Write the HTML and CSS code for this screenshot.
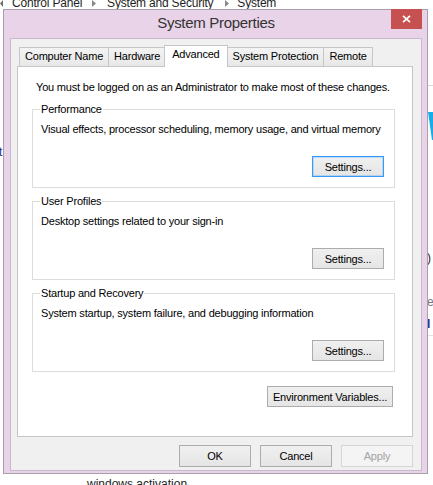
FILE: index.html
```html
<!DOCTYPE html>
<html>
<head>
<meta charset="utf-8">
<link rel="stylesheet" href="styles.css">
</head>
<body>
<div class="desktop">
  <div class="bg">
    <div class="crumbs">
      <svg class="crumb-back" width="3" height="7" viewBox="0 0 3 7"><path d="M0 3.5 L3 0 L3 7 Z" fill="#6d6d6d"/></svg>
      <span class="crumb">Control Panel</span>
      <svg class="sep" width="4" height="7" viewBox="0 0 4 7"><path d="M0 0 L4 3.5 L0 7 Z" fill="#8a8a8a"/></svg>
      <span class="crumb">System and Security</span>
      <svg class="sep sep2" width="4" height="7" viewBox="0 0 4 7"><path d="M0 0 L4 3.5 L0 7 Z" fill="#8a8a8a"/></svg>
      <span class="crumb">System</span>
    </div>
    <div class="bg-middle">
      <div class="edge-left"><span class="edge-t">t</span></div>
      <div class="edge-right">
        <div class="edge-rule rule1"></div>
        <div class="edge-blue"></div>
        <div class="edge-char paren">)</div>
        <div class="edge-char grey">e</div>
        <div class="edge-char link">l</div>
        <div class="edge-rule rule2"></div>
      </div>
    </div>
    <div class="bg-bottom">windows activation</div>
  </div>

  <div class="window">
    <div class="titlebar">System Properties</div>
    <button class="close" aria-label="Close">
      <svg width="9" height="8" viewBox="0 0 9 8"><path d="M1 0.8 L8 7.2 M8 0.8 L1 7.2" stroke="#fff" stroke-width="1.7" fill="none"/></svg>
    </button>
    <div class="client">
      <div class="tabs">
        <div class="tab">Computer Name</div>
        <div class="tab">Hardware</div>
        <div class="tab active">Advanced</div>
        <div class="tab">System Protection</div>
        <div class="tab">Remote</div>
      </div>
      <div class="panel">
        <p class="intro">You must be logged on as an Administrator to make most of these changes.</p>
        <fieldset class="group">
          <legend>Performance</legend>
          <p class="desc">Visual effects, processor scheduling, memory usage, and virtual memory</p>
          <div class="group-actions"><button class="btn settings focused">Settings...</button></div>
        </fieldset>
        <fieldset class="group">
          <legend>User Profiles</legend>
          <p class="desc">Desktop settings related to your sign-in</p>
          <div class="group-actions"><button class="btn settings">Settings...</button></div>
        </fieldset>
        <fieldset class="group">
          <legend>Startup and Recovery</legend>
          <p class="desc">System startup, system failure, and debugging information</p>
          <div class="group-actions"><button class="btn settings">Settings...</button></div>
        </fieldset>
        <div class="env-row"><button class="btn env">Environment Variables...</button></div>
      </div>
      <div class="actions">
        <button class="btn dlg">OK</button>
        <button class="btn dlg">Cancel</button>
        <button class="btn dlg" disabled>Apply</button>
      </div>
    </div>
  </div>
</div>
</body>
</html>
```

FILE: styles.css
```css
html, body {
  margin: 0;
  padding: 0;
}

body {
  font-family: "Liberation Sans", Arial, sans-serif;
  color: #000;
}

.desktop {
  position: relative;
  width: 433px;
  height: 485px;
  overflow: hidden;
  background: #fff;
}

/* ---------- background page ---------- */
.bg {
  display: flex;
  flex-direction: column;
  height: 100%;
}

.crumbs {
  display: flex;
  align-items: center;
  height: 14px;
  margin-top: -4px;
  font-size: 12px;
  line-height: 14px;
  letter-spacing: -0.2px;
  color: #1e1e1e;
  white-space: nowrap;
  flex: none;
}

.crumb-back {
  margin-right: 9px;
  flex: none;
}

.sep {
  flex: none;
  margin: 0 11px 0 10px;
}

.sep2 {
  margin: 0 8px 0 12px;
}

.bg-middle {
  flex: 1;
  display: flex;
  justify-content: space-between;
}

.edge-left {
  width: 3px;
  overflow: hidden;
  padding-top: 135px;
}

.edge-t {
  display: block;
  margin-left: -1px;
  font-size: 12px;
  line-height: 14px;
  color: #1d2f86;
}

.edge-right {
  width: 5px;
  overflow: hidden;
  display: flex;
  flex-direction: column;
}

.edge-rule {
  height: 1px;
  background: #dadada;
  flex: none;
}

.rule1 {
  margin-top: 75px;
}

.rule2 {
  margin-top: 4px;
  background: #e3e3e3;
}

.edge-blue {
  margin-top: 26px;
  height: 28px;
  flex: none;
  background: #16aeea;
  clip-path: polygon(0 0, 100% 0, 100% 100%, 80% 100%);
}

.edge-char {
  font-size: 12px;
  line-height: 14px;
  height: 14px;
  flex: none;
  margin-left: -1px;
}

.paren {
  margin-top: 111px;
  color: #222;
}

.grey {
  margin-top: 30px;
  color: #777;
}

.link {
  margin-top: 8px;
  color: #1d2f86;
  font-weight: bold;
}

.bg-bottom {
  height: 8px;
  flex: none;
  padding-left: 87px;
  font-size: 12px;
  line-height: 14px;
  color: #222;
  white-space: nowrap;
}

/* ---------- window ---------- */
.window {
  position: absolute;
  left: 3px;
  top: 9px;
  width: 425px;
  height: 465px;
  box-sizing: border-box;
  border: 1px solid #ab9eab;
  background: #e9d3e8;
  padding: 0 5px 2px 6px;
  display: flex;
  flex-direction: column;
}

.titlebar {
  height: 28px;
  box-sizing: border-box;
  padding-top: 4px;
  text-align: center;
  font-size: 15px;
  line-height: 17px;
  letter-spacing: -0.3px;
  color: #333;
  flex: none;
}

.close {
  position: absolute;
  top: -1px;
  right: 5px;
  width: 31px;
  height: 20px;
  border: 0;
  padding: 0;
  background: #c75050;
  display: flex;
  align-items: center;
  justify-content: center;
}

.client {
  flex: 1;
  border: 1px solid #c9b8c9;
  background: #f0f0f0;
  padding: 6px 8px 0 6px;
  display: flex;
  flex-direction: column;
  font-size: 11px;
  letter-spacing: -0.2px;
}

/* tabs */
.tabs {
  display: flex;
  align-items: flex-end;
  padding-left: 2px;
  flex: none;
}

.tab {
  box-sizing: border-box;
  height: 19px;
  padding: 0 5px;
  border: 1px solid #c6c6c6;
  border-bottom: 0;
  margin-right: -1px;
  background: linear-gradient(#f3f3f3, #e8e8e8);
  line-height: 17px;
  white-space: nowrap;
}

.tab.active {
  height: 22px;
  margin: 0 -1px -1px -1px;
  padding: 0 7px;
  background: #fff;
  position: relative;
  z-index: 1;
}

/* panel */
.panel {
  flex: none;
  height: 371px;
  box-sizing: border-box;
  border: 1px solid #c6c6c6;
  background: #fff;
  padding: 13px 17px 0 14px;
}

.intro {
  margin: 0;
  padding-left: 4px;
  line-height: 14px;
  white-space: nowrap;
}

.group {
  margin: 6px 0 0;
  padding: 0 10px 10px 8px;
  border: 1px solid #dcdcdc;
  min-width: 0;
}

.group:first-of-type {
  margin-top: 8px;
}

.group legend {
  padding: 0 1px;
  margin-left: -1px;
  line-height: 14px;
}

.desc {
  margin: 6px 0 0;
  line-height: 14px;
  white-space: nowrap;
}

.group-actions {
  display: flex;
  justify-content: flex-end;
  margin-top: 20px;
}

.btn {
  box-sizing: border-box;
  height: 21px;
  padding: 0;
  border: 1px solid #acacac;
  background: linear-gradient(#f0f0f0, #e5e5e5);
  font-family: "Liberation Sans", Arial, sans-serif;
  font-size: 11px;
  letter-spacing: -0.2px;
  color: #000;
  border-radius: 0;
}

.settings {
  width: 72px;
}

.focused {
  border-color: #3399ff;
  box-shadow: inset 0 0 0 1px rgba(51, 153, 255, 0.25);
}

.env-row {
  display: flex;
  justify-content: flex-end;
  margin-top: 14px;
  padding-right: 2px;
}

.env {
  width: 126px;
}

.actions {
  display: flex;
  justify-content: flex-end;
  gap: 9px;
  margin-top: 8px;
  flex: none;
}

.dlg {
  width: 72px;
  height: 22px;
}

.dlg:disabled {
  background: #f4f4f4;
  border-color: #d5d5d5;
  color: #a3a3a3;
}
```
